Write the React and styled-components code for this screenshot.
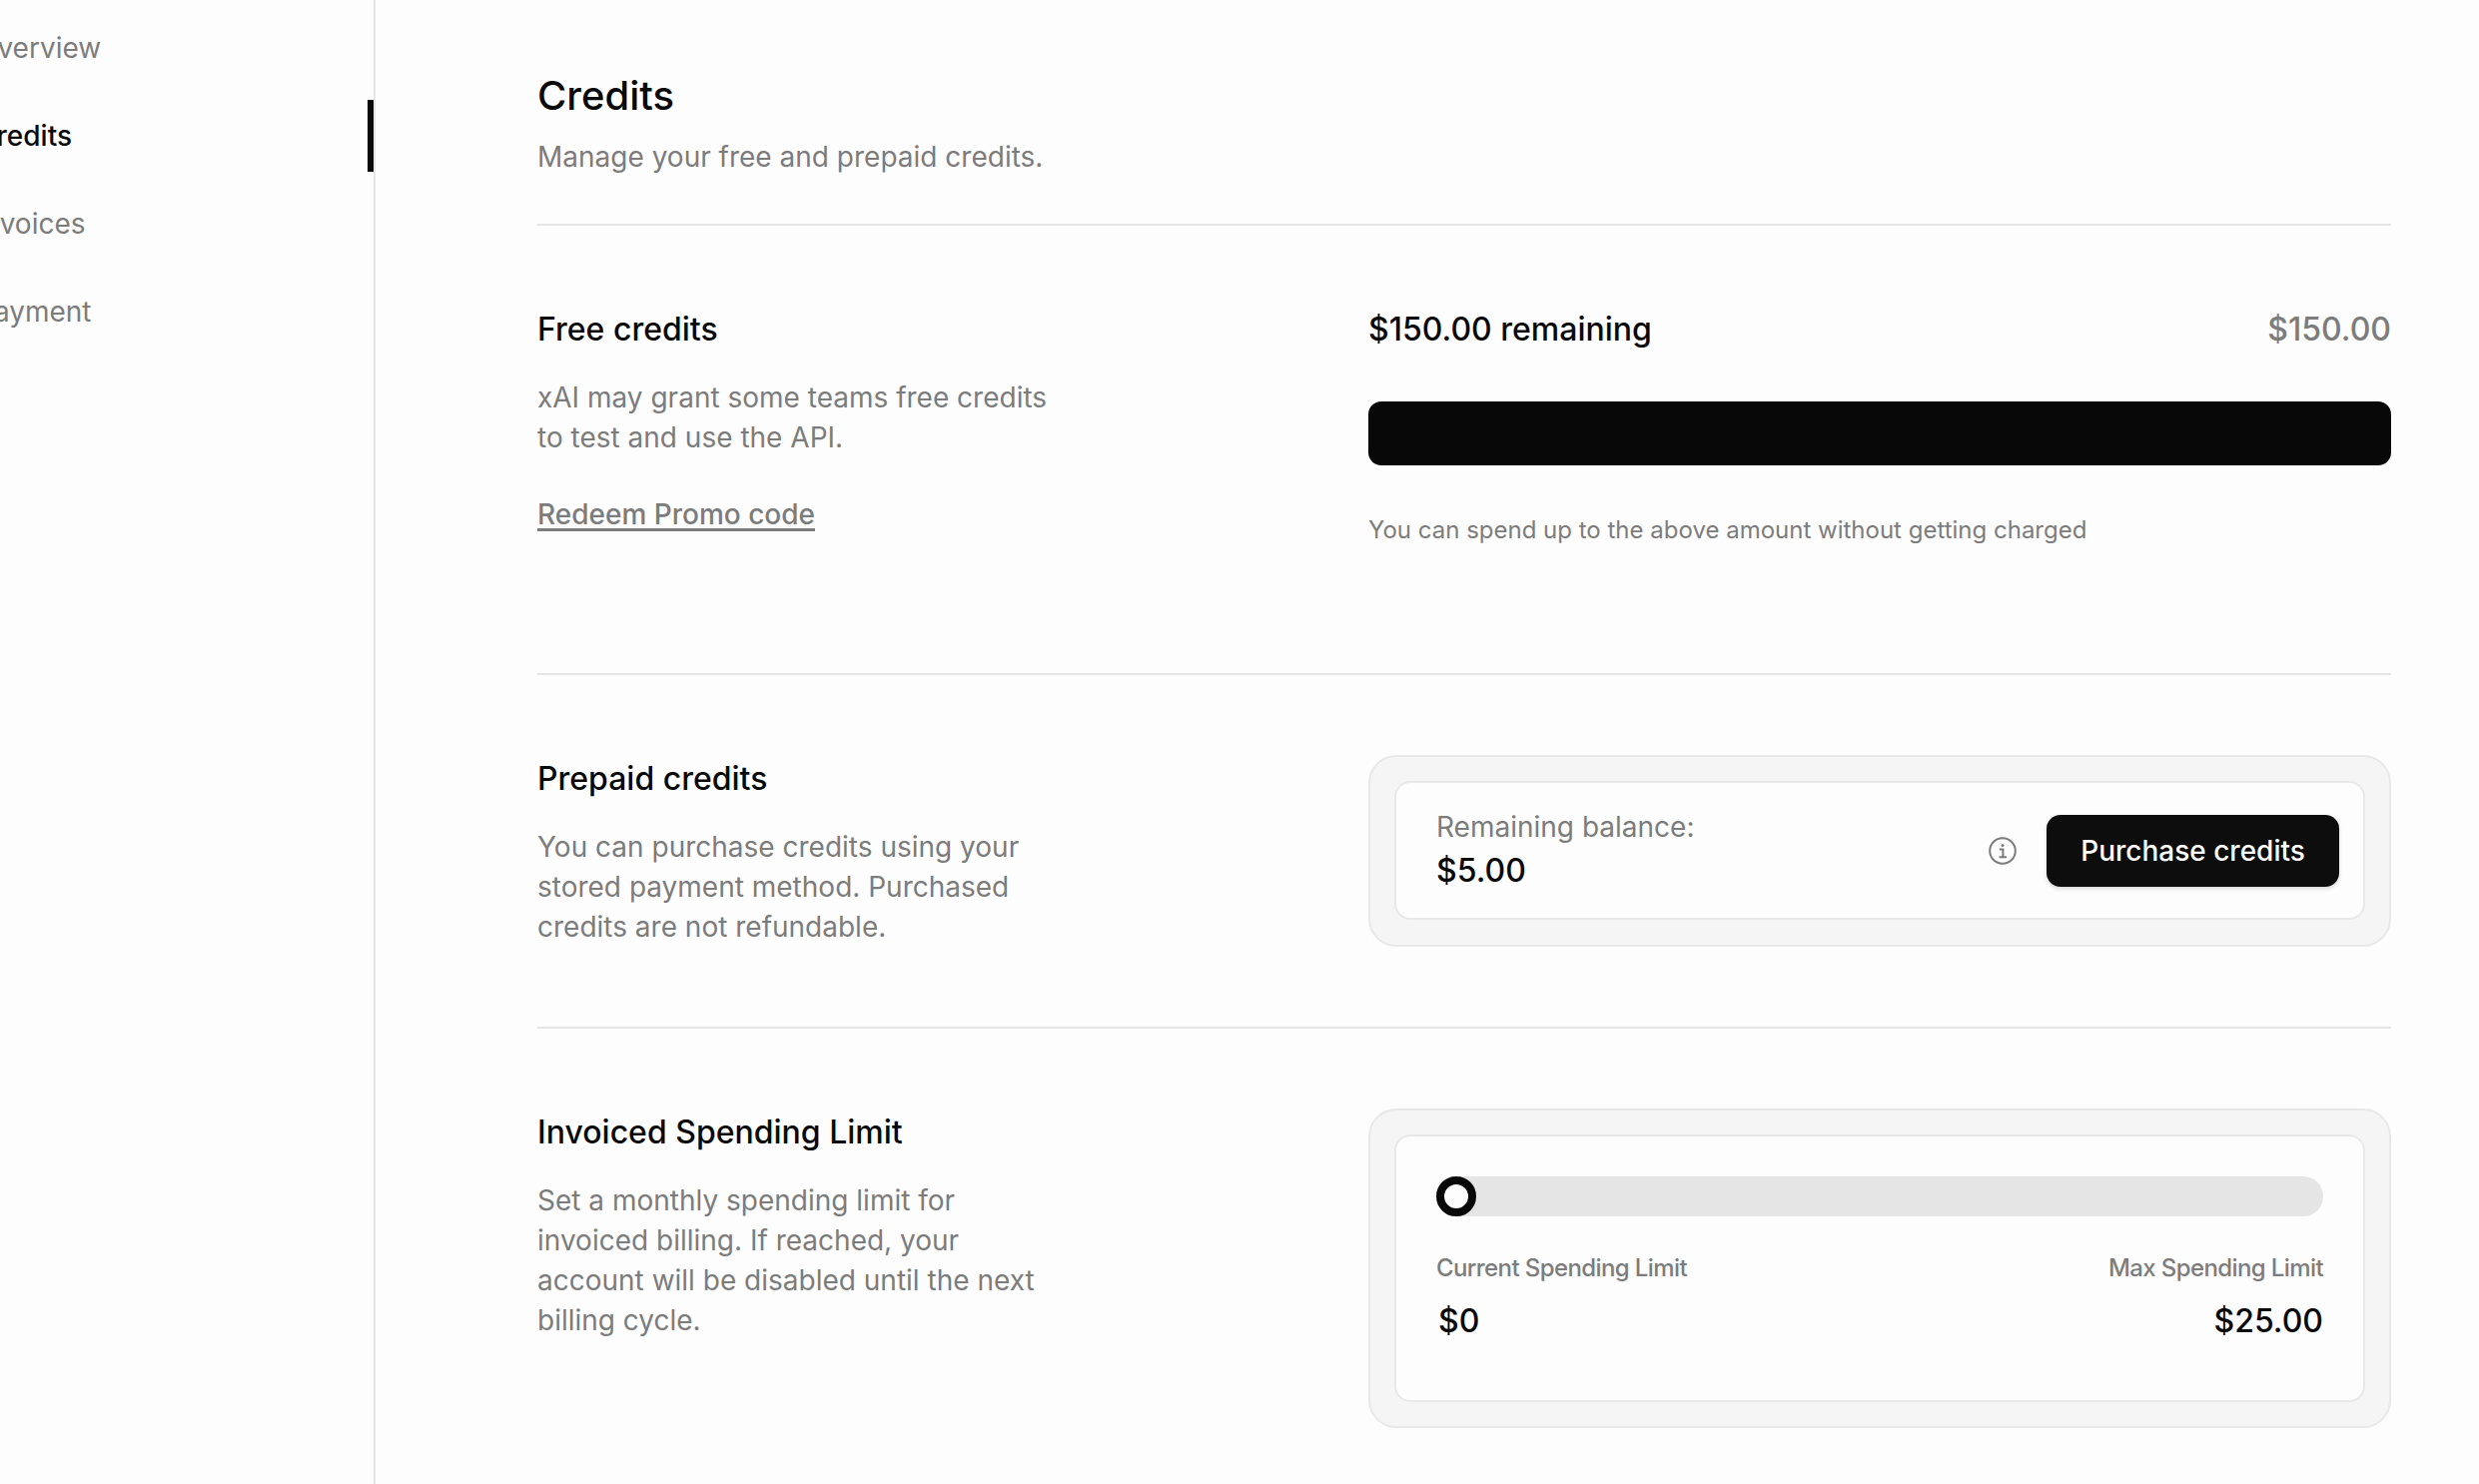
import React from "react";
import styled, { createGlobalStyle } from "styled-components";

const GlobalStyle = createGlobalStyle`
	html, body {
		margin: 0;
		height: 100%;
		overflow: hidden;
		background: #fdfdfd;
	}
	body {
		font-family: Inter, "Liberation Sans", sans-serif;
		color: #0a0a0a;
	}
	* {
		box-sizing: border-box;
	}
`;

const Page = styled.div`
	display: flex;
	width: 2482px;
	height: 1486px;
	overflow: hidden;
`;

const Sidebar = styled.nav`
	flex: 0 0 376px;
	height: 100%;
	border-right: 2px solid #e5e5e5;
	padding-top: 12px;
	overflow: hidden;
`;

const NavItem = styled.a`
	display: flex;
	align-items: center;
	height: 72px;
	margin-bottom: 16px;
	font-size: 28px;
	line-height: 40px;
	font-weight: ${({$active}) => $active ? 500 : 400};
	white-space: nowrap;
	color: ${({$active}) => $active ? "#0a0a0a" : "#7c7c7c"};
	border-right: 6px solid ${({$active}) => $active ? "#0a0a0a" : "transparent"};
`;

const NavLabel = styled.span`
	margin-left: -24px;
`;

const Main = styled.main`
	flex: 1;
	padding: 0 88px 0 162px;
`;

const Header = styled.header`
	padding-top: 70px;
	height: 226px;
	border-bottom: 2px solid #e5e5e5;
`;

const PageTitle = styled.h1`
	margin: 0 0 15px;
	font-size: 40px;
	line-height: 52px;
	font-weight: 500;
`;

const Muted = styled.p`
	margin: 0;
	font-size: 28px;
	line-height: 40px;
	color: #7c7c7c;
`;

const Section = styled.section`
	display: grid;
	grid-template-columns: 832px 1fr;
	padding: 80px 0 ${({$bottom}) => $bottom}px;
	border-bottom: ${({$last}) => $last ? "none" : "2px solid #e5e5e5"};
`;

const Intro = styled.div`
	display: flex;
	flex-direction: column;
	align-items: flex-start;
`;

const SectionTitle = styled.h2`
	margin: 0 0 24px;
	font-size: 32px;
	line-height: 48px;
	font-weight: 500;
`;

const IntroText = styled(Muted)`
	max-width: 530px;
`;

const PromoLink = styled.a`
	margin-top: 37px;
	font-size: 28px;
	line-height: 40px;
	font-weight: 450;
	color: #7c7c7c;
	text-decoration: underline;
	text-decoration-thickness: 3px;
	text-underline-offset: 4px;
`;

const SummaryRow = styled.div`
	display: flex;
	justify-content: space-between;
	font-size: 32px;
	line-height: 48px;
	font-weight: 500;
	margin-bottom: 48px;
`;

const SummaryTotal = styled.span`
	color: #7c7c7c;
`;

const FullBar = styled.div`
	height: 64px;
	border-radius: 13px;
	background: #080808;
`;

const Note = styled.p`
	margin: 49px 0 0;
	font-size: 24px;
	line-height: 32px;
	color: #7c7c7c;
`;

const Shell = styled.div`
	padding: 24px;
	border: 2px solid #e8e8e8;
	border-radius: 28px;
	background: #f5f5f5;
`;

const Panel = styled.div`
	border: 2px solid #e8e8e8;
	border-radius: 16px;
	background: #fdfdfd;
`;

const BalancePanel = styled(Panel)`
	display: flex;
	align-items: center;
	height: 139px;
	padding: 0 24px 0 40px;
`;

const Balance = styled.div`
	flex: 1;
	margin-bottom: 1px;
`;

const BalanceLabel = styled.div`
	font-size: 28px;
	line-height: 40px;
	color: #7c7c7c;
`;

const BalanceValue = styled.div`
	margin-top: 2px;
	font-size: 32px;
	line-height: 44px;
	font-weight: 500;
`;

const InfoGlyph = styled.svg`
	width: 28px;
	height: 28px;
	margin-right: 30px;
	fill: none;
	stroke: #7c7c7c;
`;

const PurchaseButton = styled.button`
	width: 293px;
	height: 72px;
	border: none;
	border-radius: 14px;
	background: #0d0d0d;
	color: #fdfdfd;
	font: 500 28px/40px Inter, sans-serif;
	box-shadow: 0 2px 4px rgba(0, 0, 0, 0.15);
`;

const LimitPanel = styled(Panel)`
	height: 268px;
	padding: 40px 40px 0;
`;

const Track = styled.div`
	height: 40px;
	border-radius: 20px;
	background: #e5e5e5;
`;

const Thumb = styled.div`
	width: 40px;
	height: 40px;
	border: 8px solid #080808;
	border-radius: 50%;
	background: #fdfdfd;
`;

const LimitGrid = styled.div`
	display: flex;
	justify-content: space-between;
	margin-top: 36px;
`;

const LimitColumn = styled.div`
	display: flex;
	flex-direction: column;
	align-items: ${({$end}) => $end ? "flex-end" : "flex-start"};
`;

const LimitLabel = styled.span`
	font-size: 24px;
	line-height: 32px;
	font-weight: 500;
	letter-spacing: -0.6px;
	color: #7c7c7c;
`;

const LimitValue = styled.span`
	margin-top: 13px;
	padding-left: ${({$end}) => $end ? 0 : 2}px;
	font-size: 32px;
	line-height: 48px;
	font-weight: 500;
`;

const InfoIcon = () => (
	<InfoGlyph viewBox="0 0 28 28">
		<circle cx="14" cy="14" r="12.8" strokeWidth="2"/>
		<circle cx="14" cy="8.4" r="1.5" fill="#7c7c7c" stroke="none"/>
		<path d="M10.8 12.6H14.4V19.6M10.6 20.2H18" strokeWidth="2"/>
	</InfoGlyph>
);

const navItems = [
	{label: "Overview"},
	{label: "Credits", active: true},
	{label: "Invoices"},
	{label: "Payment"}
];

const App = () => (
	<Page>
		<GlobalStyle/>
		<Sidebar>
			{navItems.map(item => (
				<NavItem key={item.label} $active={item.active}>
					<NavLabel>{item.label}</NavLabel>
				</NavItem>
			))}
		</Sidebar>
		<Main>
			<Header>
				<PageTitle>Credits</PageTitle>
				<Muted>Manage your free and prepaid credits.</Muted>
			</Header>
			<Section $bottom={127}>
				<Intro>
					<SectionTitle>Free credits</SectionTitle>
					<IntroText>xAI may grant some teams free credits to test and use the API.</IntroText>
					<PromoLink>Redeem Promo code</PromoLink>
				</Intro>
				<div>
					<SummaryRow>
						<span>$150.00 remaining</span>
						<SummaryTotal>$150.00</SummaryTotal>
					</SummaryRow>
					<FullBar/>
					<Note>You can spend up to the above amount without getting charged</Note>
				</div>
			</Section>
			<Section $bottom={80}>
				<Intro>
					<SectionTitle>Prepaid credits</SectionTitle>
					<IntroText>You can purchase credits using your stored payment method. Purchased credits are not refundable.</IntroText>
				</Intro>
				<Shell>
					<BalancePanel>
						<Balance>
							<BalanceLabel>Remaining balance:</BalanceLabel>
							<BalanceValue>$5.00</BalanceValue>
						</Balance>
						<InfoIcon/>
						<PurchaseButton>Purchase credits</PurchaseButton>
					</BalancePanel>
				</Shell>
			</Section>
			<Section $bottom={0} $last>
				<Intro>
					<SectionTitle>Invoiced Spending Limit</SectionTitle>
					<IntroText>Set a monthly spending limit for invoiced billing. If reached, your account will be disabled until the next billing cycle.</IntroText>
				</Intro>
				<Shell>
					<LimitPanel>
						<Track><Thumb/></Track>
						<LimitGrid>
							<LimitColumn>
								<LimitLabel>Current Spending Limit</LimitLabel>
								<LimitValue>$0</LimitValue>
							</LimitColumn>
							<LimitColumn $end>
								<LimitLabel>Max Spending Limit</LimitLabel>
								<LimitValue $end>$25.00</LimitValue>
							</LimitColumn>
						</LimitGrid>
					</LimitPanel>
				</Shell>
			</Section>
		</Main>
	</Page>
);

export default App;
